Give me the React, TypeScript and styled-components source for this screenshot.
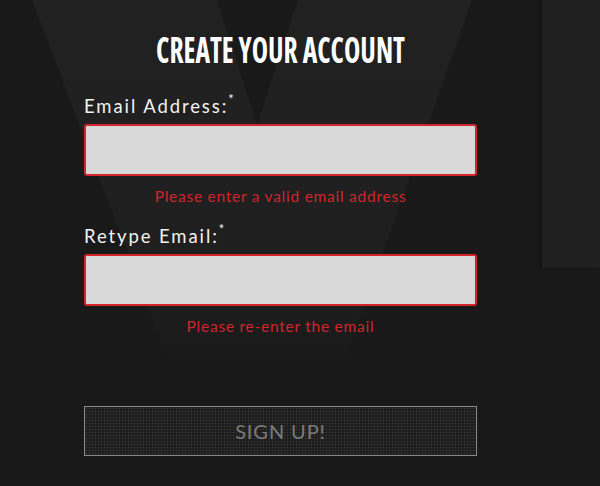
import React from 'react';
import styled, { createGlobalStyle } from 'styled-components';

const GlobalStyle = createGlobalStyle`
    html, body {
        margin: 0;
        padding: 0;
        background: #191919;
    }
    * {
        box-sizing: border-box;
    }
`;

const Page = styled.div`
    position: relative;
    display: flex;
    width: 600px;
    height: 486px;
    overflow: hidden;
    background: #191919;
    font-family: 'Open Sans', 'Liberation Sans', sans-serif;
`;

const Watermark = styled.svg`
    position: absolute;
    left: 0;
    top: 0;
    pointer-events: none;
`;

const Main = styled.main`
    position: relative;
    flex: 1;
    padding: 32px 0 0 84px;
`;

const Side = styled.aside`
    position: relative;
    width: 58px;
    height: 268px;
    background: #202020;
    box-shadow: -2px 0 3px rgba(0, 0, 0, 0.25);
`;

const Form = styled.form`
    width: 393px;
    display: flex;
    flex-direction: column;
`;

const Title = styled.h2`
    margin: 0 0 22px;
    text-align: center;
    color: #fff;
    font-family: 'Open Sans', sans-serif;
    font-weight: 700;
    font-stretch: 75%;
    font-size: 35px;
    line-height: 36px;

    & span {
        display: inline-block;
        transform: scaleX(0.79);
    }
`;

const Label = styled.label`
    display: block;
    color: #f2f2f2;
    font-family: 'Lato', 'Open Sans', sans-serif;
    font-size: 18.5px;
    letter-spacing: 1.9px;
    line-height: 22px;
    margin-bottom: 7px;

    & sup {
        font-size: 13px;
        position: relative;
        top: -2px;
        letter-spacing: 0;
    }
`;

const Input = styled.input<{ $invalid?: boolean }>`
    display: block;
    width: 100%;
    height: 52px;
    background: #d9d9d9;
    border: 2px solid ${(p) => (p.$invalid ? '#d1252b' : '#888')};
    border-radius: 3px;
    outline: none;
    padding: 0 12px;
    font-size: 16px;
`;

const Error = styled.div`
    color: #d1252b;
    text-align: center;
    font-family: 'Lato', 'Open Sans', sans-serif;
    font-size: 15.5px;
    letter-spacing: 0.75px;
    line-height: 20px;
    margin: 10px 0 14px;
`;

const SignUp = styled.button`
    margin-top: 56px;
    height: 50px;
    width: 100%;
    border: 1px solid #8a8a8a;
    background-color: #1c1c1c;
    background-image: radial-gradient(circle, #3b3b3b 0.7px, transparent 1.1px);
    background-size: 3px 3px;
    color: #7a7a7a;
    font-family: 'Lato', 'Open Sans', sans-serif;
    font-size: 20px;
    letter-spacing: 0.9px;
    cursor: pointer;
`;

const Field = ({ label, error }: { label: string; error: string }) => (
    <div>
        <Label>
            {label}
            <sup>*</sup>
        </Label>
        <Input type='email' $invalid />
        <Error>{error}</Error>
    </div>
);

export default function App() {
    return (
        <Page>
            <GlobalStyle />
            <Watermark width='600' height='486' viewBox='0 0 600 486'>
                <defs>
                    <linearGradient id='vfade' x1='0' y1='0' x2='0' y2='1' gradientUnits='objectBoundingBox'>
                        <stop offset='0' stopColor='#212121' />
                        <stop offset='0.45' stopColor='#1f1f1f' />
                        <stop offset='0.62' stopColor='#191919' />
                    </linearGradient>
                </defs>
                <polygon points='32,0 217,0 257,125 298,0 472,0 260,600' fill='url(#vfade)' />
            </Watermark>
            <Main>
                <Form onSubmit={(e) => e.preventDefault()}>
                    <Title>
                        <span>CREATE YOUR ACCOUNT</span>
                    </Title>
                    <Field label='Email Address:' error='Please enter a valid email address' />
                    <Field label='Retype Email:' error='Please re-enter the email' />
                    <SignUp type='submit'>SIGN UP!</SignUp>
                </Form>
            </Main>
            <Side />
        </Page>
    );
}
